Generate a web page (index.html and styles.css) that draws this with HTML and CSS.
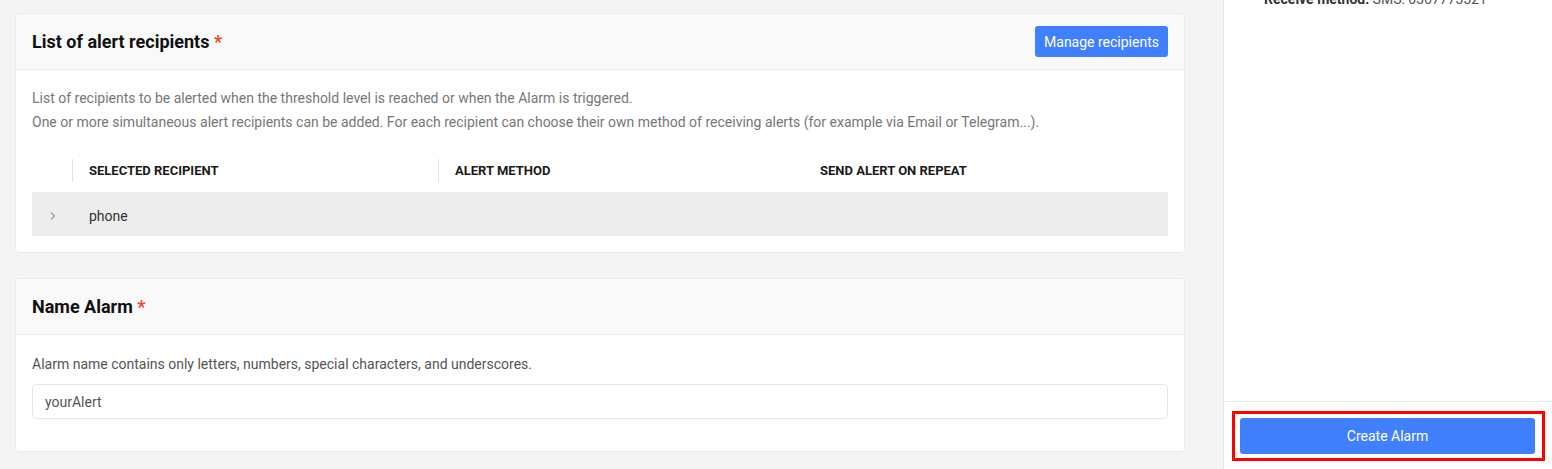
FILE: index.html
```html
<!DOCTYPE html>
<html lang="en">
<head>
    <meta charset="UTF-8">
    <meta name="viewport" content="width=device-width, initial-scale=1.0">
    <title>Create Alarm</title>
    <link rel="stylesheet" href="styles.css">
</head>
<body>
    <div class="main">
        <div class="card">
            <div class="card-header">
                <h2>List of alert recipients <span class="required">*</span></h2>
                <button class="btn">Manage recipients</button>
            </div>
            <div class="card-body">
                <p class="hint">List of recipients to be alerted when the threshold level is reached or when the Alarm is triggered.<br>
                One or more simultaneous alert recipients can be added. For each recipient can choose their own method of receiving alerts (for example via Email or Telegram...).</p>
                <div class="table">
                    <div class="table-head">
                        <div class="cell expand"></div>
                        <div class="cell">Selected recipient</div>
                        <div class="cell">Alert method</div>
                        <div class="cell no-sep">Send alert on repeat</div>
                    </div>
                    <div class="table-row">
                        <div class="cell expand">
                            <svg width="8" height="12" viewBox="0 0 8 12"><path d="M2 2.5 L5.5 6 L2 9.5" fill="none" stroke="#9a9a9a" stroke-width="1.1"/></svg>
                        </div>
                        <div class="cell">phone</div>
                        <div class="cell"></div>
                        <div class="cell"></div>
                    </div>
                </div>
            </div>
        </div>

        <div class="card">
            <div class="card-header">
                <h2>Name Alarm <span class="required">*</span></h2>
            </div>
            <div class="card-body form-body">
                <p class="hint single">Alarm name contains only letters, numbers, special characters, and underscores.</p>
                <input type="text" class="text-input" value="yourAlert">
            </div>
        </div>
    </div>

    <div class="sidebar">
        <div class="sidebar-content">
            <p class="summary"><b>Receive method:</b> SMS: 0367773321</p>
        </div>
        <div class="sidebar-footer">
            <div class="highlight">
                <button class="btn btn-block">Create Alarm</button>
            </div>
        </div>
    </div>
</body>
</html>
```

FILE: styles.css
```css
body {
    font-family: Roboto, "Liberation Sans", sans-serif;
    margin: 0;
    padding: 0;
    height: 100vh;
    overflow: hidden;
    display: flex;
    background: #f4f4f4;
    color: #222;
    font-size: 14px;
}
.main {
    flex: 1;
    padding: 13px 38px 0 15px;
}
.card {
    background: #fff;
    border: 1px solid #ebebeb;
    border-radius: 4px;
    margin-bottom: 25px;
}
.card-header {
    height: 55px;
    background: #f9f9f9;
    border-bottom: 1px solid #ebebeb;
    border-radius: 4px 4px 0 0;
    display: flex;
    align-items: center;
    justify-content: space-between;
    padding: 0 16px;
}
.card-header h2 {
    margin: 0;
    font-size: 18px;
    font-weight: 700;
    color: #111;
}
.required {
    color: #f5472a;
}
.btn {
    font-family: inherit;
    font-size: 14px;
    color: #fff;
    background: #4080ff;
    border: none;
    border-radius: 3px;
    height: 31px;
    padding: 0 9px;
    cursor: pointer;
}
.card-body {
    padding: 16px;
}
.form-body {
    padding-top: 17px;
}
.hint {
    margin: 0 0 14px;
    line-height: 24px;
    color: #777;
}
.hint.single {
    color: #555;
    margin-bottom: 8px;
}
.table-head,
.table-row {
    display: grid;
    grid-template-columns: 40px 366px 365px 1fr;
    align-items: center;
    height: 44px;
}
.table-head .cell {
    font-size: 13px;
    font-weight: 700;
    text-transform: uppercase;
    color: #1a1a1a;
    border-left: 1px solid #e3e3e3;
    line-height: 22px;
    padding-top: 1px;
}
.table-head .cell.expand,
.table-head .cell.no-sep {
    border-left-color: transparent;
}
.cell {
    padding-left: 16px;
}
.table-row .cell {
    padding-left: 17px;
    padding-top: 3px;
}
.table-row .cell.expand {
    display: flex;
    align-items: center;
}
.table-row {
    background: #ededed;
    color: #333;
}
.text-input {
    display: block;
    box-sizing: border-box;
    width: 100%;
    height: 35px;
    border: 1px solid #e6e6e6;
    border-radius: 4px;
    padding: 0 12px;
    font-family: inherit;
    font-size: 14px;
    color: #555;
    margin-bottom: 16px;
}
.sidebar {
    width: 328px;
    background: #fff;
    border-left: 1px solid #e8e8e8;
    display: flex;
    flex-direction: column;
}
.sidebar-content {
    flex: 1;
    padding: 0 40px;
}
.summary {
    margin: -11px 0 0;
    line-height: 20px;
    color: #555;
}
.summary b {
    color: #333;
}
.sidebar-footer {
    border-top: 1px solid #e8e8e8;
    padding: 9px 7px 8px 8px;
}
.highlight {
    border: 3px solid #f00;
    padding: 4px 7px 4px 5px;
}
.btn-block {
    display: block;
    width: 100%;
    height: 36px;
}
```
